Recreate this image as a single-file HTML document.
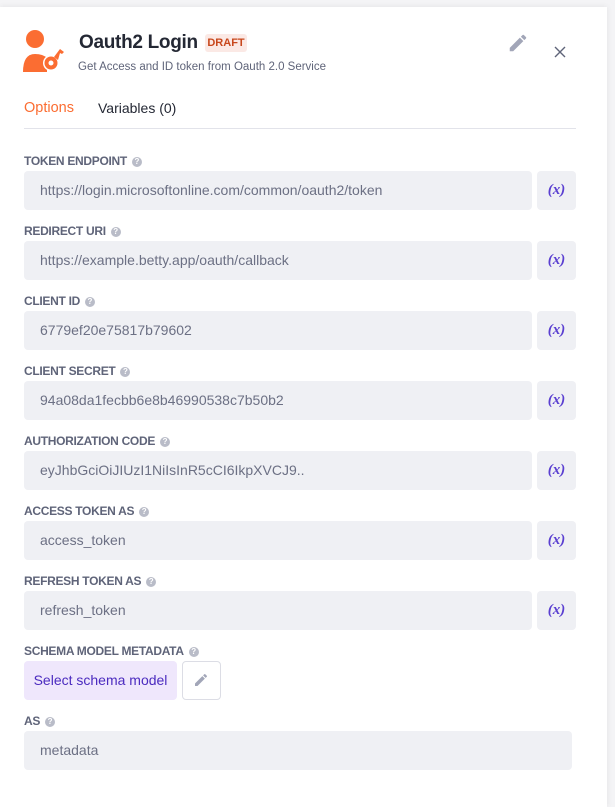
<!DOCTYPE html>
<html><head><meta charset="utf-8"><style>
*{box-sizing:border-box;margin:0;padding:0}
body{width:615px;height:800px;background:#f4f4f6;font-family:"Liberation Sans",sans-serif;position:relative;overflow:hidden}
.card{position:absolute;left:0;top:7px;width:607px;height:800px;background:#fff;box-shadow:0 0 6px rgba(0,0,0,.08)}
.abs{position:absolute}
.lbl{position:absolute;left:24px;font-size:12px;font-weight:bold;color:#5f6479;letter-spacing:-.3px}
.q{display:inline-block;width:10px;height:10px;border-radius:50%;background:#b9bcc8;color:#fff;font-size:8px;text-align:center;line-height:10px;margin-left:5px;vertical-align:1px;letter-spacing:0}
.inp{position:absolute;left:24px;width:508px;height:39px;background:#eff0f4;border-radius:4px;font-size:14px;color:#6c7084;padding-left:16px;line-height:39px}
.xb{position:absolute;left:537px;width:39px;height:39px;background:#eff0f4;border-radius:4px;color:#5a3fd1;font-family:"Liberation Serif",serif;font-weight:bold;font-style:italic;font-size:15px;text-align:center;line-height:39px}
</style></head><body>
<div class="card"></div>
<svg class="abs" style="left:23px;top:30px" width="44" height="44" viewBox="0 0 44 44">
<circle cx="12" cy="9" r="9" fill="#fb6d32"/>
<path d="M0 42 Q0 24 12 24 Q20 24 24 28 L24 42 Z" fill="#fb6d32"/>
<circle cx="28" cy="33" r="8" fill="#fff"/>
<circle cx="28" cy="33" r="6.5" fill="#fb6d32"/>
<circle cx="28" cy="33" r="2.5" fill="#fff"/>
<path d="M31 27 L37 19 L41 22 L39 24 L37 23 L35 30Z" fill="#fb6d32"/>
</svg>
<div class="abs" style="left:79px;top:32px;font-size:19px;font-weight:bold;color:#242834;letter-spacing:-.3px">Oauth2 Login</div>
<div class="abs" style="left:205px;top:34px;width:42px;height:18px;background:#fbe9e5;border-radius:3px;color:#c8471c;font-size:11px;font-weight:bold;text-align:center;line-height:18px">DRAFT</div>
<div class="abs" style="left:78px;top:61px;font-size:11.5px;color:#5f6479">Get Access and ID token from Oauth 2.0 Service</div>
<svg class="abs" style="left:507px;top:32px" width="22" height="22" viewBox="0 0 24 24"><path d="M3 17.25V21h3.75L17.81 9.94l-3.75-3.75L3 17.25zM20.71 7.04a1 1 0 000-1.41l-2.34-2.34a1 1 0 00-1.41 0l-1.83 1.83 3.75 3.75 1.83-1.83z" fill="#a2a6b8"/></svg>
<svg class="abs" style="left:554px;top:46px" width="12" height="12" viewBox="0 0 12 12"><path d="M1 1L11 11M11 1L1 11" stroke="#5f6479" stroke-width="1.4"/></svg>
<div class="abs" style="left:24px;top:100px;font-size:14.5px;color:#fb6d32">Options</div>
<div class="abs" style="left:98px;top:100px;font-size:14px;color:#242834">Variables (0)</div>
<div class="abs" style="left:24px;top:128px;width:552px;height:1px;background:#e2e3ea"></div>

<div class="lbl" style="top:154px">TOKEN ENDPOINT<span class="q">?</span></div>
<div class="inp" style="top:171px">https://login.microsoftonline.com/common/oauth2/token</div><div class="xb" style="top:171px">(x)</div>
<div class="lbl" style="top:224px">REDIRECT URI<span class="q">?</span></div>
<div class="inp" style="top:241px">https://example.betty.app/oauth/callback</div><div class="xb" style="top:241px">(x)</div>
<div class="lbl" style="top:294px">CLIENT ID<span class="q">?</span></div>
<div class="inp" style="top:311px">6779ef20e75817b79602</div><div class="xb" style="top:311px">(x)</div>
<div class="lbl" style="top:364px">CLIENT SECRET<span class="q">?</span></div>
<div class="inp" style="top:381px">94a08da1fecbb6e8b46990538c7b50b2</div><div class="xb" style="top:381px">(x)</div>
<div class="lbl" style="top:434px">AUTHORIZATION CODE<span class="q">?</span></div>
<div class="inp" style="top:451px">eyJhbGciOiJIUzI1NiIsInR5cCI6IkpXVCJ9..</div><div class="xb" style="top:451px">(x)</div>
<div class="lbl" style="top:504px">ACCESS TOKEN AS<span class="q">?</span></div>
<div class="inp" style="top:521px">access_token</div><div class="xb" style="top:521px">(x)</div>
<div class="lbl" style="top:574px">REFRESH TOKEN AS<span class="q">?</span></div>
<div class="inp" style="top:591px">refresh_token</div><div class="xb" style="top:591px">(x)</div>
<div class="lbl" style="top:644px">SCHEMA MODEL METADATA<span class="q">?</span></div>
<div class="abs" style="left:24px;top:661px;width:153px;height:39px;background:#efe7fc;border-radius:4px;color:#4b2bbf;font-size:14px;text-align:center;line-height:39px">Select schema model</div>
<div class="abs" style="left:182px;top:661px;width:39px;height:39px;border:1px solid #dcdde5;border-radius:4px"></div>
<svg class="abs" style="left:193px;top:672px" width="16" height="16" viewBox="0 0 24 24"><path d="M3 17.25V21h3.75L17.81 9.94l-3.75-3.75L3 17.25zM20.71 7.04a1 1 0 000-1.41l-2.34-2.34a1 1 0 00-1.41 0l-1.83 1.83 3.75 3.75 1.83-1.83z" fill="#a2a6b8"/></svg>
<div class="lbl" style="top:714px">AS<span class="q">?</span></div>
<div class="inp" style="top:731px;width:548px">metadata</div>
</body></html>
